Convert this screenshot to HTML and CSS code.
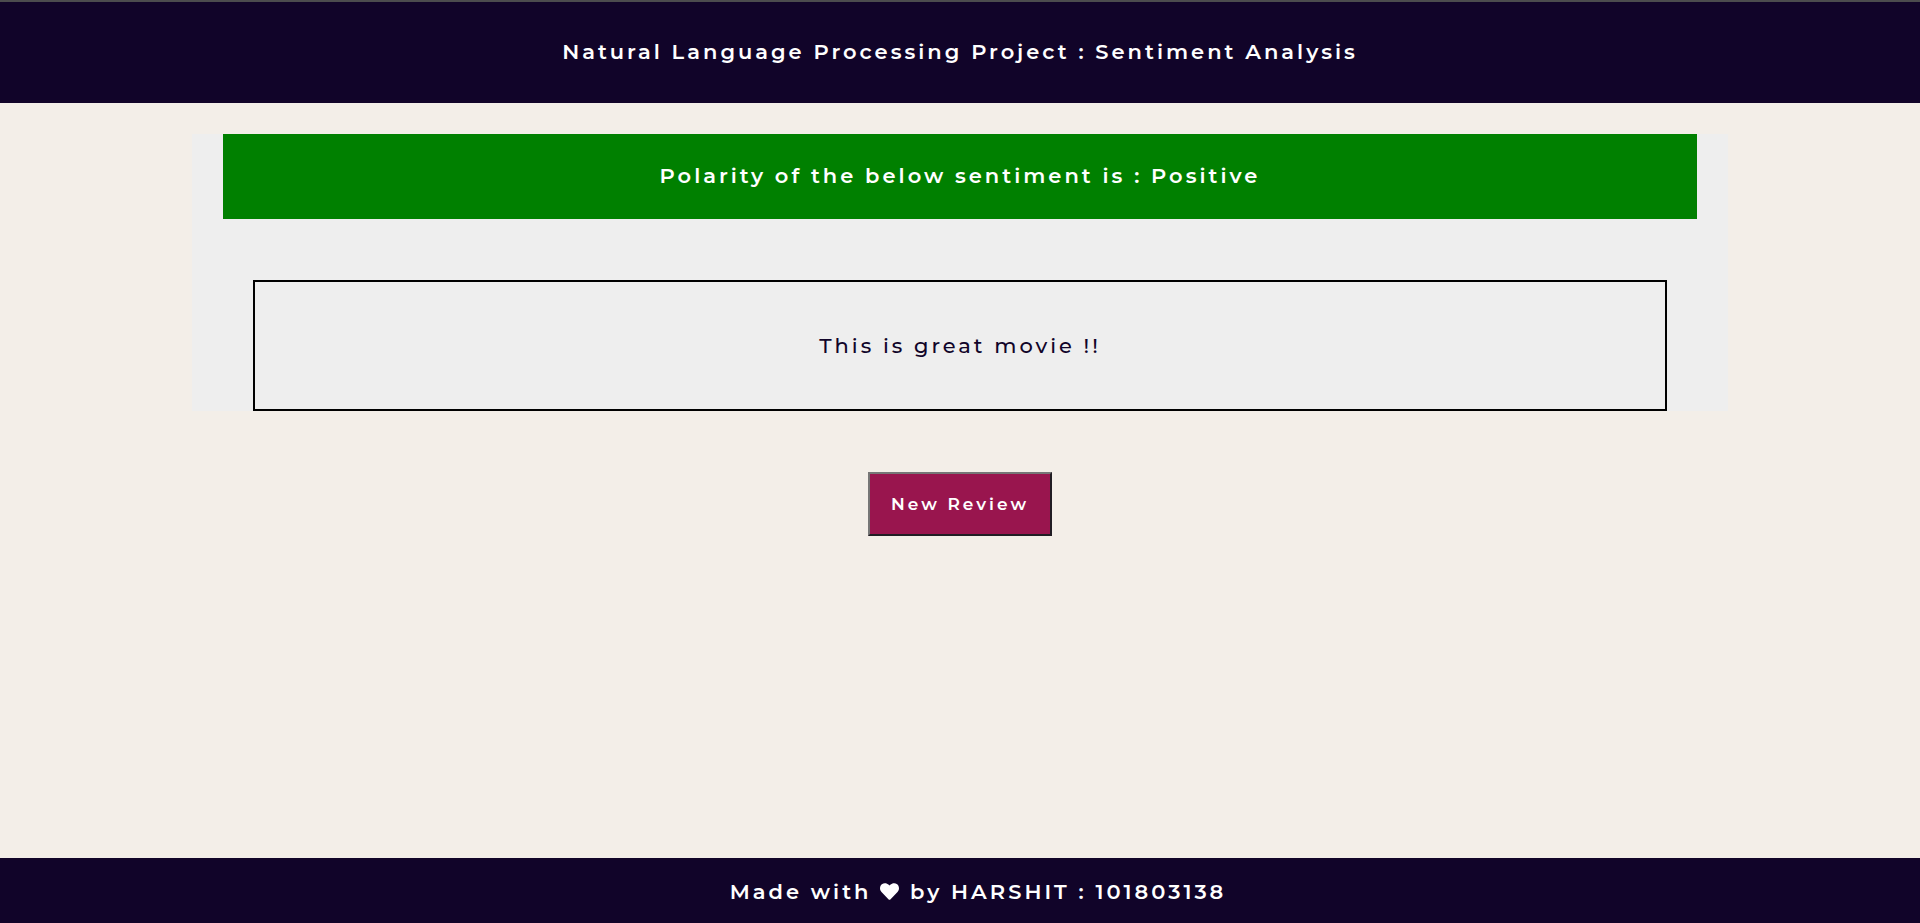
FILE: index.html
```html
<!DOCTYPE html>
<html lang="en">
<head>
<meta charset="utf-8">
<title>Sentiment Analysis</title>
<link rel="stylesheet" href="styles.css">
</head>
<body>
<header class="header"><h1 class="heading">Natural Language Processing Project : Sentiment Analysis</h1></header>
<main class="main">
<section class="panel">
<h2 class="result">Polarity of the below sentiment is : Positive</h2>
<p class="review">This is great movie !!</p>
</section>
<button class="new-review" type="button">New Review</button>
</main>
<footer class="footer">
<p class="credit">Made with <svg class="heart" viewBox="0 0 512 512" role="img" aria-label="love"><path fill="currentColor" d="M462 62c-55-47-136-38-186 14l-20 20-20-20C186 24 105 15 50 62c-63 54-66 150-10 208l193 200c13 13 33 13 46 0l193-200c56-58 53-154-10-208z"/></svg> by HARSHIT : 101803138</p>
</footer>
</body>
</html>
```
FILE: styles.css
```css
* { box-sizing: border-box; }
body {
  display: flex;
  flex-direction: column;
  min-height: 100vh;
  margin: 0;
  background: #f3eee8;
  color: #110429;
  font-family: Montserrat, Inter, sans-serif;
  font-size: 21px;
  font-weight: 500;
  line-height: 27px;
  letter-spacing: 3px;
  text-align: center;
}
.header {
  padding: 36px 20px 38px;
  border-top: 2px solid #4c4c4e;
  background: #110429;
  color: #fff;
}
.heading, .result, .review, .credit { margin: 0; font-size: inherit; }
.heading, .result, .credit { font-weight: 600; }
.main {
  flex: 1;
  display: flex;
  flex-direction: column;
  align-items: center;
  gap: 61px;
  padding: 31px 10%;
}
.panel {
  align-self: stretch;
  padding: 0 31px;
  background: #eee;
}
.result {
  padding: 28px 20px 30px;
  background: green;
  color: #fff;
}
.review {
  margin: 61px 30px 0;
  padding: 50px 20px;
  border: 2px solid #000;
}
.new-review {
  padding: 20px 21px;
  border: 2px solid;
  border-color: #767676 #211d24 #211d24 #767676;
  background: #99154e;
  color: #fff;
  font: 600 17px/20px Montserrat, Inter, sans-serif;
  letter-spacing: 3px;
}
.footer {
  padding: 20px 0 18px 36px;
  background: #110429;
  color: #fff;
}
.heart {
  width: 19px;
  height: 19px;
  margin-right: 2px;
  vertical-align: -2px;
}
```
